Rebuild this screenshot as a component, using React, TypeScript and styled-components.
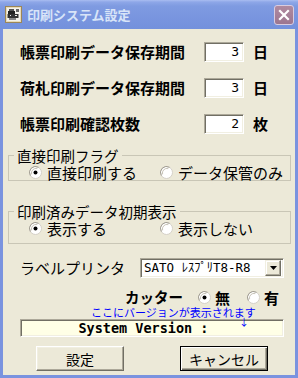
import styled, { createGlobalStyle } from "styled-components";

const GlobalStyle = createGlobalStyle`
  html, body {
    margin: 0;
    padding: 0;
    background: #ECE9D8;
  }
  body {
    font-family: "Noto Sans CJK JP", sans-serif;
    color: #000;
  }
`;

const JP = `"Noto Sans CJK JP", "Noto Sans", sans-serif`;
const MONO = `"DejaVu Sans Mono", "Noto Sans CJK JP", monospace`;

const Window = styled.div`
  width: 298px;
  height: 378px;
  display: flex;
  flex-direction: column;
  overflow: hidden;
`;

const TitleBar = styled.div`
  height: 29px;
  flex: none;
  display: flex;
  align-items: center;
  padding: 0 4px 0 5px;
  box-sizing: border-box;
  background: linear-gradient(#A9BDF1 0px, #8EA7E8 2px, #7F9BE1 6px, #7995DF 60%, #7391DC 100%);
`;

const TitleText = styled.span`
  flex: 1;
  margin-left: 5px;
  font: bold 13px ${JP};
  line-height: 16px;
  color: #D8E4F8;
`;

const CloseButton = styled.div`
  width: 20px;
  height: 20px;
  box-sizing: border-box;
  border: 1px solid #D9CCE0;
  border-radius: 3px;
  background: linear-gradient(#B08AA0, #9C7690);
  display: flex;
  align-items: center;
  justify-content: center;
`;

const Body = styled.div`
  flex: 1;
  display: flex;
  flex-direction: column;
  background: #ECE9D8;
  border: 3px solid #7A93DF;
  border-top: none;
`;

const Periods = styled.div`
  display: flex;
  flex-direction: column;
  gap: 16px;
  padding: 13px 0 0 17px;
`;

const SettingRow = styled.div`
  display: flex;
  align-items: center;
  height: 20px;
`;

const BoldLabel = styled.span<{ $width?: number }>`
  width: ${(p) => (p.$width ? `${p.$width}px` : "auto")};
  font: bold 15px ${JP};
  line-height: 20px;
  white-space: nowrap;
`;

const Sunken = styled.div`
  box-sizing: border-box;
  background: #fff;
  border: 1px solid;
  border-color: #ACA899 #FFFFFF #FFFFFF #ACA899;
  box-shadow: inset 1px 1px #716F64, inset -1px -1px #F1EFE2;
`;

const NumberBox = styled(Sunken)`
  width: 40px;
  height: 20px;
  padding: 0 4px;
  text-align: right;
  font: 13px ${MONO};
  line-height: 18px;
`;

const Unit = styled.span`
  margin-left: 9px;
  font: bold 15px ${JP};
  line-height: 20px;
`;

const Group = styled.fieldset<{ $top: number; $bottom: number }>`
  margin: ${(p) => p.$top}px 4px 0 5px;
  padding: 2px 0 ${(p) => p.$bottom}px 0;
  border: 1px solid #C9C6B6;
  min-width: 0;
`;

const Legend = styled.legend`
  margin-left: 5px;
  padding: 0 3px;
  font: 14.5px ${JP};
  line-height: 15px;
`;

const RadioRow = styled.div`
  display: grid;
  grid-template-columns: 131px auto;
  height: 15px;
  padding-left: 20px;
`;

const RadioOption = styled.label<{ $gap?: number; $bold?: boolean }>`
  display: flex;
  align-items: center;
  gap: ${(p) => p.$gap ?? 5}px;
  font: ${(p) => (p.$bold ? "bold " : "")}15px ${JP};
  line-height: 15px;
  white-space: nowrap;
`;

const PrinterRow = styled.div`
  display: flex;
  align-items: center;
  height: 20px;
  margin-top: 14px;
  padding-left: 17px;
`;

const PrinterLabel = styled.span`
  width: 120px;
  font: 15px ${JP};
  line-height: 20px;
`;

const Select = styled(Sunken)`
  width: 144px;
  height: 20px;
  display: flex;
  align-items: center;
  padding: 2px;
`;

const SelectValue = styled.span`
  flex: 1;
  padding-left: 1px;
  font: 12.5px ${MONO};
  line-height: 16px;
  white-space: nowrap;
  overflow: hidden;
`;

const DropButton = styled.div`
  width: 16px;
  height: 16px;
  box-sizing: border-box;
  background: #ECE9D8;
  border: 1px solid;
  border-color: #F1EFE2 #716F64 #716F64 #F1EFE2;
  box-shadow: inset -1px -1px #ACA899, inset 1px 1px #fff;
  display: flex;
  align-items: center;
  justify-content: center;
`;

const CutterRow = styled.div`
  display: flex;
  align-items: center;
  gap: 17px;
  height: 16px;
  margin-top: 11px;
  padding-left: 122px;
`;

const CutterLabel = styled.span`
  margin-right: -2px;
  font: bold 14.5px ${JP};
  line-height: 16px;
`;

const Hint = styled.div`
  margin-top: 1px;
  padding-left: 88px;
  height: 12px;
  font: 11px ${JP};
  line-height: 12px;
  color: #0000FF;
  white-space: nowrap;
`;

const VersionWrap = styled.div`
  position: relative;
  margin: 1px 0 0 17px;
`;

const VersionBox = styled(Sunken)`
  width: 264px;
  height: 18px;
  background: #FFFFE6;
  padding-right: 9px;
  text-align: center;
  font: bold 13.5px ${MONO};
  line-height: 16px;
  white-space: pre;
`;

const Arrow = styled.span`
  position: absolute;
  left: 219px;
  top: -3px;
  font: 10px ${JP};
  line-height: 12px;
  color: #0000FF;
`;

const ButtonRow = styled.div`
  display: flex;
  gap: 56px;
  margin-top: 9px;
  padding-left: 33px;
`;

const Button = styled.div<{ $default?: boolean }>`
  width: 88px;
  height: 25px;
  box-sizing: border-box;
  display: flex;
  align-items: center;
  justify-content: center;
  background: #ECE9D8;
  font: 14px ${JP};
  line-height: 18px;
  border: 1px solid;
  border-color: ${(p) => (p.$default ? "#000" : "#FFFFFF #716F64 #716F64 #FFFFFF")};
  box-shadow: ${(p) =>
    p.$default
      ? "inset 1px 1px #FFFFFF, inset -1px -1px #716F64, inset -2px -2px #ACA899"
      : "inset -1px -1px #ACA899, inset 1px 1px #F1EFE2"};
`;

const Radio = ({ checked }: { checked?: boolean }) => (
  <svg width="13" height="13" viewBox="0 0 13 13">
    <circle cx="6.5" cy="6.5" r="6" fill="#FFFFFF" stroke="#D4D0C8" />
    <path d="M1.3 9.5 A6 6 0 0 1 9.5 1.3" fill="none" stroke="#A09C90" strokeWidth="1" />
    <path d="M2.6 8.3 A4.6 4.6 0 0 1 8.3 2.6" fill="none" stroke="#C8C4B8" strokeWidth="1" />
    {checked && <circle cx="6.5" cy="6.5" r="2" fill="#000" />}
  </svg>
);

const AppIcon = () => (
  <svg width="17" height="17" viewBox="0 0 17 17">
    <rect x="0.5" y="0.5" width="16" height="16" fill="#E8DCB8" stroke="#9C8658" />
    <rect x="2" y="2" width="13" height="13" fill="#F4F2EC" />
    <path d="M3 5h7v3H3z" fill="#222" />
    <path d="M4 3h5v2H4z" fill="#555" />
    <path d="M2.5 8h11v4h-11z" fill="#333" />
    <path d="M4 12h7v2H4z" fill="#888" />
    <path d="M10 9h2v1h-2z M5 9h1v1H5z" fill="#EEE" />
    <path d="M11 3h3v3h-3z" fill="#666" />
  </svg>
);

export default function App() {
  return (
    <>
      <GlobalStyle />
      <Window>
        <TitleBar>
          <AppIcon />
          <TitleText>印刷システム設定</TitleText>
          <CloseButton>
            <svg width="12" height="12" viewBox="0 0 12 12">
              <path d="M2 2L10 10M10 2L2 10" stroke="#FFFFFF" strokeWidth="2.2" strokeLinecap="square" />
            </svg>
          </CloseButton>
        </TitleBar>

        <Body>
          <Periods>
            <SettingRow>
              <BoldLabel $width={184}>帳票印刷データ保存期間</BoldLabel>
              <NumberBox>3</NumberBox>
              <Unit>日</Unit>
            </SettingRow>
            <SettingRow>
              <BoldLabel $width={184}>荷札印刷データ保存期間</BoldLabel>
              <NumberBox>3</NumberBox>
              <Unit>日</Unit>
            </SettingRow>
            <SettingRow>
              <BoldLabel $width={184}>帳票印刷確認枚数</BoldLabel>
              <NumberBox>2</NumberBox>
              <Unit>枚</Unit>
            </SettingRow>
          </Periods>

          <Group $top={14} $bottom={0}>
            <Legend>直接印刷フラグ</Legend>
            <RadioRow>
              <RadioOption>
                <Radio checked />
                直接印刷する
              </RadioOption>
              <RadioOption>
                <Radio />
                データ保管のみ
              </RadioOption>
            </RadioRow>
          </Group>

          <Group $top={23} $bottom={7}>
            <Legend>印刷済みデータ初期表示</Legend>
            <RadioRow>
              <RadioOption>
                <Radio checked />
                表示する
              </RadioOption>
              <RadioOption>
                <Radio />
                表示しない
              </RadioOption>
            </RadioRow>
          </Group>

          <PrinterRow>
            <PrinterLabel>ラベルプリンタ</PrinterLabel>
            <Select>
              <SelectValue>SATO ﾚｽﾌﾟﾘT8-R8</SelectValue>
              <DropButton>
                <svg width="7" height="4" viewBox="0 0 7 4">
                  <path d="M0 0h7L3.5 4z" fill="#000" />
                </svg>
              </DropButton>
            </Select>
          </PrinterRow>

          <CutterRow>
            <CutterLabel>カッター</CutterLabel>
            <RadioOption $gap={4} $bold>
              <Radio checked />
              無
            </RadioOption>
            <RadioOption $gap={4} $bold>
              <Radio />
              有
            </RadioOption>
          </CutterRow>

          <Hint>ここにバージョンが表示されます</Hint>
          <VersionWrap>
            <VersionBox>System Version : </VersionBox>
            <Arrow>↓</Arrow>
          </VersionWrap>

          <ButtonRow>
            <Button>設定</Button>
            <Button $default>キャンセル</Button>
          </ButtonRow>
        </Body>
      </Window>
    </>
  );
}
